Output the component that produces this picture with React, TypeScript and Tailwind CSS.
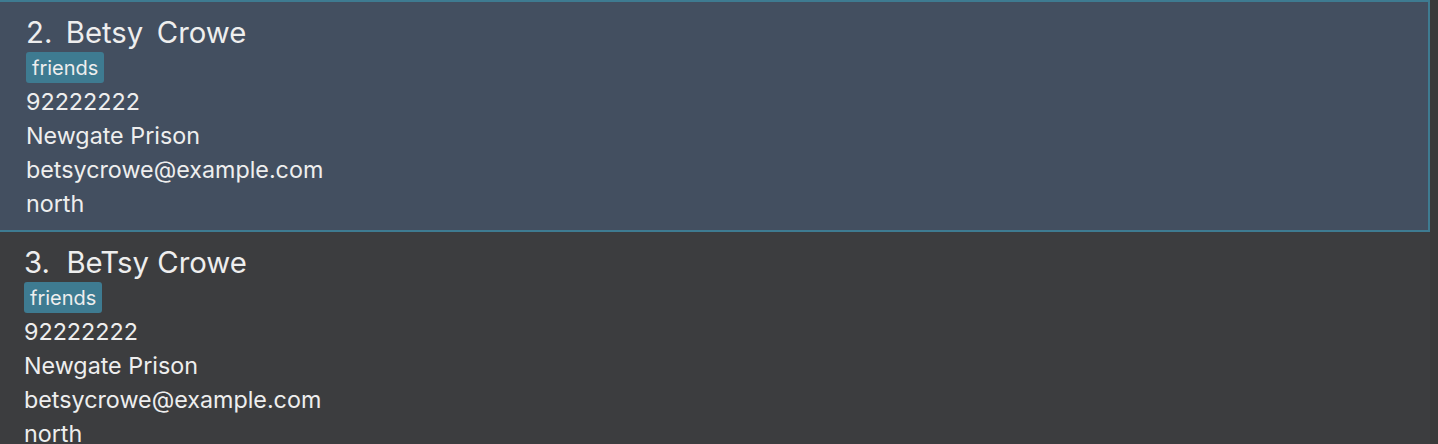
import React from 'react';

type Person = {
  id: number;
  name: string;
  tags: string[];
  phone: string;
  address: string;
  email: string;
  region: string;
};

const people: Person[] = [
  { id: 2, name: 'Betsy  Crowe', tags: ['friends'], phone: '92222222', address: 'Newgate Prison', email: 'betsycrowe@example.com', region: 'north' },
  { id: 3, name: 'BeTsy Crowe', tags: ['friends'], phone: '92222222', address: 'Newgate Prison', email: 'betsycrowe@example.com', region: 'north' },
];

function PersonCard({ person, selected }: { person: Person; selected: boolean }) {
  return (
    <div
      className={
        selected
          ? 'w-[1430px] bg-[#434f60] border-t-2 border-r-2 border-b-2 border-[#3e7b91] pl-[26px] pt-[11px] pb-[9px]'
          : 'w-[1430px] bg-[#3c3d3f] pl-[24px] pt-[11px] pb-[9px]'
      }
    >
      <div
        className={
          selected
            ? 'h-[39px] flex items-center text-[29.3px] text-[#eeeeee] whitespace-pre leading-none [word-spacing:-1.5px]'
            : 'h-[39px] flex items-center text-[29.3px] text-[#eeeeee] whitespace-pre leading-none'
        }
      >
        {person.id}.  {person.name}
      </div>
      <div className="flex gap-2 h-[33px] items-start">
        {person.tags.map((t) => (
          <span key={t} className="h-[31px] flex items-center px-[6px] rounded-[3px] bg-[#3e7b91] text-[20px] text-[#eeeeee] leading-none">
            {t}
          </span>
        ))}
      </div>
      {[person.phone, person.address, person.email, person.region].map((line, i) => (
        <div key={i} className="h-[34px] flex items-center text-[23.3px] text-[#eeeeee] leading-none">
          {line}
        </div>
      ))}
    </div>
  );
}

export default function App() {
  return (
    <div className="w-[1438px] h-[444px] overflow-hidden bg-[#3a3a3a] font-['Inter',sans-serif]">
      {people.map((p, i) => (
        <PersonCard key={p.id} person={p} selected={i === 0} />
      ))}
    </div>
  );
}
